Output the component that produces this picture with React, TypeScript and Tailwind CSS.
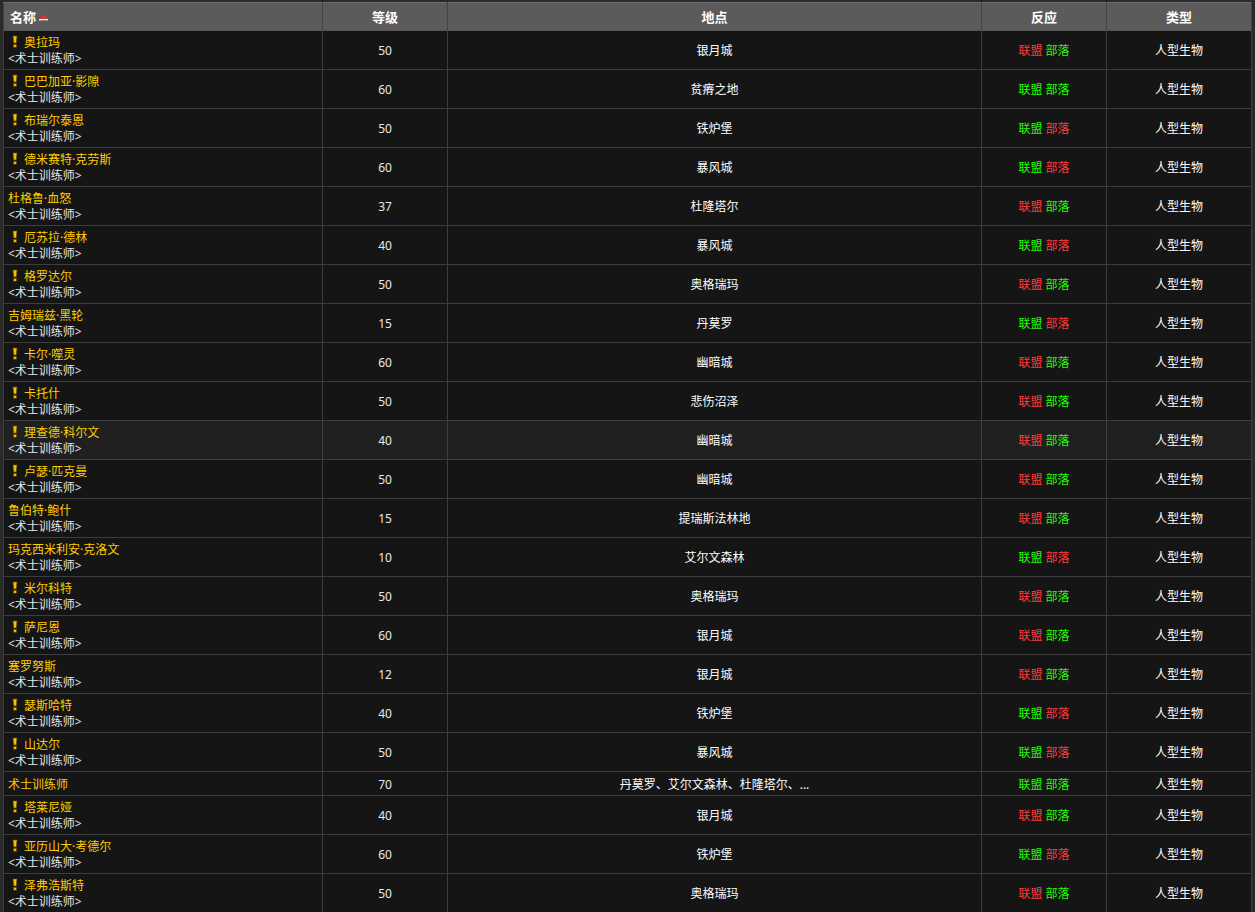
import React from "react";

type Npc = {
  name: string;
  quest: boolean;
  sub: boolean;
  level: number;
  zone: string;
  // true = green (friendly), false = red (hostile)
  alliance: boolean;
  horde: boolean;
};

const npcs: Npc[] = [
  { name: "奥拉玛", quest: true, sub: true, level: 50, zone: "银月城", alliance: false, horde: true },
  { name: "巴巴加亚·影隙", quest: true, sub: true, level: 60, zone: "贫瘠之地", alliance: true, horde: true },
  { name: "布瑞尔泰恩", quest: true, sub: true, level: 50, zone: "铁炉堡", alliance: true, horde: false },
  { name: "德米赛特·克劳斯", quest: true, sub: true, level: 60, zone: "暴风城", alliance: true, horde: false },
  { name: "杜格鲁·血怒", quest: false, sub: true, level: 37, zone: "杜隆塔尔", alliance: false, horde: true },
  { name: "厄苏拉·德林", quest: true, sub: true, level: 40, zone: "暴风城", alliance: true, horde: false },
  { name: "格罗达尔", quest: true, sub: true, level: 50, zone: "奥格瑞玛", alliance: false, horde: true },
  { name: "吉姆瑞兹·黑轮", quest: false, sub: true, level: 15, zone: "丹莫罗", alliance: true, horde: false },
  { name: "卡尔·噬灵", quest: true, sub: true, level: 60, zone: "幽暗城", alliance: false, horde: true },
  { name: "卡托什", quest: true, sub: true, level: 50, zone: "悲伤沼泽", alliance: false, horde: true },
  { name: "理查德·科尔文", quest: true, sub: true, level: 40, zone: "幽暗城", alliance: false, horde: true },
  { name: "卢瑟·匹克曼", quest: true, sub: true, level: 50, zone: "幽暗城", alliance: false, horde: true },
  { name: "鲁伯特·鲍什", quest: false, sub: true, level: 15, zone: "提瑞斯法林地", alliance: false, horde: true },
  { name: "玛克西米利安·克洛文", quest: false, sub: true, level: 10, zone: "艾尔文森林", alliance: true, horde: false },
  { name: "米尔科特", quest: true, sub: true, level: 50, zone: "奥格瑞玛", alliance: false, horde: true },
  { name: "萨尼恩", quest: true, sub: true, level: 60, zone: "银月城", alliance: false, horde: true },
  { name: "塞罗努斯", quest: false, sub: true, level: 12, zone: "银月城", alliance: false, horde: true },
  { name: "瑟斯哈特", quest: true, sub: true, level: 40, zone: "铁炉堡", alliance: true, horde: false },
  { name: "山达尔", quest: true, sub: true, level: 50, zone: "暴风城", alliance: true, horde: false },
  { name: "术士训练师", quest: false, sub: false, level: 70, zone: "丹莫罗、艾尔文森林、杜隆塔尔、...", alliance: true, horde: true },
  { name: "塔莱尼娅", quest: true, sub: true, level: 40, zone: "银月城", alliance: false, horde: true },
  { name: "亚历山大·考德尔", quest: true, sub: true, level: 60, zone: "铁炉堡", alliance: true, horde: false },
  { name: "泽弗浩斯特", quest: true, sub: true, level: 50, zone: "奥格瑞玛", alliance: false, horde: true },
];

const QuestMark = () => (
  <svg width="6" height="13" viewBox="0 0 6 13" className="inline-block mr-[6px] ml-[4px] align-[-1px]">
    <path d="M1 1 H5 L4.2 8 H1.8 Z" fill="#f5c400" stroke="#6b4a00" strokeWidth="0.6" />
    <rect x="1.6" y="9.4" width="2.8" height="2.8" fill="#f5c400" stroke="#6b4a00" strokeWidth="0.6" />
  </svg>
);

// little red dome with a light base, the "sorted" marker
const SortIcon = () => (
  <svg width="11" height="8" viewBox="0 0 11 8" className="inline-block ml-[2px] align-middle">
    <path d="M1.5 6 Q1.5 1.5 5.5 1.5 Q9.5 1.5 9.5 6 Z" fill="#d03838" />
    <rect x="1" y="5" width="9" height="1.5" fill="#f2f2f2" />
    <rect x="1.5" y="6.5" width="8" height="1" fill="#3c7d46" />
  </svg>
);

const Rep = ({ ok, label }: { ok: boolean; label: string }) => (
  <span className={ok ? "text-[#1eff00]" : "text-[#ff3b3b]"}>{label}</span>
);

export default function App() {
  return (
    <div
      className="w-[1255px] min-h-[912px] bg-[#2a2a2a] pt-[2px] pl-[3px] pr-[4px] text-[12px] leading-[16px] text-white"
      style={{ fontFamily: '"Noto Sans", "Noto Sans CJK SC", sans-serif' }}
    >
      <table className="w-[1248px] table-fixed border-collapse">
        <colgroup>
          <col className="w-[319px]" />
          <col className="w-[125px]" />
          <col className="w-[534px]" />
          <col className="w-[125px]" />
          <col className="w-[145px]" />
        </colgroup>
        <thead>
          <tr className="h-[28px] bg-[#5b5b5b] text-[13px] font-bold">
            <th className="text-left pl-[6px] border-x border-[#444] border-t border-t-[#707070]">
              名称
              <SortIcon />
            </th>
            <th className="border-x border-[#444] border-t border-t-[#707070]">等级</th>
            <th className="border-x border-[#444] border-t border-t-[#707070]">地点</th>
            <th className="border-x border-[#444] border-t border-t-[#707070]">反应</th>
            <th className="border-x border-[#444] border-t border-t-[#707070]">类型</th>
          </tr>
        </thead>
        <tbody>
          {npcs.map((n, i) => (
            <tr
              key={n.name}
              className={
                (n.sub ? "h-[39px] " : "h-[24px] ") +
                (i === 10 ? "bg-[#202020]" : "bg-[#151515]")
              }
            >
              <td className="border border-[#3d3d3d] border-t-[#555] pl-[4px] pt-[3px] pb-[1px] align-middle">
                <div className="text-[#ffcc00] whitespace-nowrap">
                  {n.quest && <QuestMark />}
                  {n.name}
                </div>
                {n.sub && <div className="text-[#e6e6e6]">&lt;术士训练师&gt;</div>}
              </td>
              <td className="border border-[#3d3d3d] border-t-[#555] pt-[2px] text-center text-[#e8e8e8]">{n.level}</td>
              <td className="border border-[#3d3d3d] border-t-[#555] pt-[2px] text-center">{n.zone}</td>
              <td className="border border-[#3d3d3d] border-t-[#555] pt-[2px] text-center">
                <Rep ok={n.alliance} label="联盟" /> <Rep ok={n.horde} label="部落" />
              </td>
              <td className="border border-[#3d3d3d] border-t-[#555] pt-[2px] text-center">人型生物</td>
            </tr>
          ))}
        </tbody>
      </table>
    </div>
  );
}
